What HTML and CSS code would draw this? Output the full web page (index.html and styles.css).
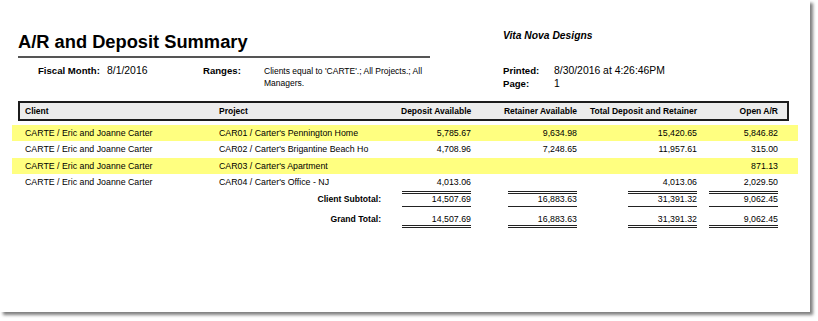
FILE: index.html
```html
<!DOCTYPE html>
<html>
<head>
<meta charset="utf-8">
<title>A/R and Deposit Summary</title>
<link rel="stylesheet" href="styles.css">
</head>
<body>
<div class="paper">
  <div class="top">
    <div class="title-block">
      <h1 class="title">A/R and Deposit Summary</h1>
      <div class="params">
        <span class="lbl">Fiscal Month:</span>
        <span class="val">8/1/2016</span>
        <span class="lbl">Ranges:</span>
        <span class="ranges">Clients equal to 'CARTE'.; All Projects.; All Managers.</span>
      </div>
    </div>
    <div class="meta">
      <div class="company">Vita Nova Designs</div>
      <div class="printed">
        <span class="lbl">Printed:</span><span class="val">8/30/2016 at 4:26:46PM</span>
        <span class="lbl">Page:</span><span class="val">1</span>
      </div>
    </div>
  </div>

  <div class="report">
    <div class="thead grid">
      <span>Client</span>
      <span>Project</span>
      <span class="num">Deposit Available</span>
      <span class="num">Retainer Available</span>
      <span class="num">Total Deposit and Retainer</span>
      <span class="num">Open A/R</span>
    </div>
    <div class="rows">
      <div class="row grid hl">
        <span>CARTE / Eric and Joanne Carter</span>
        <span>CAR01 / Carter's Pennington Home</span>
        <span class="num">5,785.67</span>
        <span class="num">9,634.98</span>
        <span class="num">15,420.65</span>
        <span class="num">5,846.82</span>
      </div>
      <div class="row grid">
        <span>CARTE / Eric and Joanne Carter</span>
        <span>CAR02 / Carter's Brigantine Beach Ho</span>
        <span class="num">4,708.96</span>
        <span class="num">7,248.65</span>
        <span class="num">11,957.61</span>
        <span class="num">315.00</span>
      </div>
      <div class="row grid hl">
        <span>CARTE / Eric and Joanne Carter</span>
        <span>CAR03 / Carter's Apartment</span>
        <span class="num"></span>
        <span class="num"></span>
        <span class="num"></span>
        <span class="num">871.13</span>
      </div>
      <div class="row grid">
        <span>CARTE / Eric and Joanne Carter</span>
        <span>CAR04 / Carter's Office - NJ</span>
        <span class="num">4,013.06</span>
        <span class="num"></span>
        <span class="num">4,013.06</span>
        <span class="num">2,029.50</span>
      </div>
      <div class="sum sub grid">
        <span class="label">Client Subtotal:</span>
        <span class="cell"><span class="u">14,507.69</span></span>
        <span class="cell"><span class="u">16,883.63</span></span>
        <span class="cell"><span class="u">31,391.32</span></span>
        <span class="cell"><span class="u">9,062.45</span></span>
      </div>
      <div class="sum grand grid">
        <span class="label">Grand Total:</span>
        <span class="cell"><span class="u">14,507.69</span></span>
        <span class="cell"><span class="u">16,883.63</span></span>
        <span class="cell"><span class="u">31,391.32</span></span>
        <span class="cell"><span class="u">9,062.45</span></span>
      </div>
    </div>
  </div>
</div>
</body>
</html>
```

FILE: styles.css
```css
* { box-sizing: border-box; }

html, body {
  margin: 0;
  background: #fff;
}

body {
  font-family: "Liberation Sans", Arial, Helvetica, sans-serif;
  color: #000;
  width: 818px;
  height: 321px;
  overflow: hidden;
}

.paper {
  width: 810px;
  height: 312px;
  background: #fff;
  box-shadow: 3px 3px 3px rgba(0, 0, 0, 0.5);
}

.top {
  display: flex;
  align-items: flex-start;
}

.title-block {
  margin-left: 18px;
  width: 412px;
}

.title {
  margin: 33px 0 0;
  font-size: 18.3px;
  line-height: 18px;
  font-weight: bold;
  padding-bottom: 5px;
  border-bottom: 2px solid #555;
}

.params {
  display: grid;
  grid-template-columns: 69px 96px 61px 170px;
  margin: 7px 0 0 20px;
  line-height: 12px;
  align-items: start;
}

.lbl {
  font-weight: bold;
  font-size: 9.6px;
}

.val {
  font-size: 10.4px;
}

.ranges {
  font-size: 8.5px;
  line-height: 12px;
}

.meta {
  margin-left: 73px;
}

.company {
  margin-top: 30px;
  font-style: italic;
  font-weight: bold;
  font-size: 10.3px;
  line-height: 12px;
}

.printed {
  display: grid;
  grid-template-columns: 51px auto;
  margin-top: 21.5px;
  line-height: 13px;
}

.report {
  margin-top: 11px;
}

.grid {
  display: grid;
  grid-template-columns: 194px 182px 70px 106px 120px 81px;
}

.thead {
  margin-left: 18px;
  width: 771px;
  height: 20px;
  border: 2px solid #1c1c1c;
  background: #ececec;
  padding-left: 5px;
  font-weight: bold;
  font-size: 8.5px;
  line-height: 16px;
}

.num {
  text-align: right;
  white-space: nowrap;
}

.rows {
  margin: 4px 0 0 12px;
  width: 786px;
}

.row {
  padding-left: 13px;
  height: 16.5px;
  line-height: 16.5px;
  font-size: 8.8px;
  white-space: nowrap;
}

.row.hl {
  background: #ffff80;
}

.sum {
  padding-left: 13px;
  font-size: 8.8px;
}

.sum .label {
  grid-column: 1 / 3;
  text-align: right;
  padding-right: 20px;
  font-weight: bold;
  font-size: 8.6px;
}

.sum .cell {
  display: flex;
  justify-content: flex-end;
}

.u {
  width: 69px;
  text-align: right;
}

.sub .label {
  padding-top: 3px;
  line-height: 11px;
}

.sub .u {
  border-top: 3px double #222;
  border-bottom: 1px solid #222;
  line-height: 11px;
  padding-bottom: 1px;
}

.grand {
  padding-top: 6px;
}

.grand .label,
.grand .u {
  line-height: 12px;
}

.grand .u {
  border-bottom: 3px double #222;
}
```
